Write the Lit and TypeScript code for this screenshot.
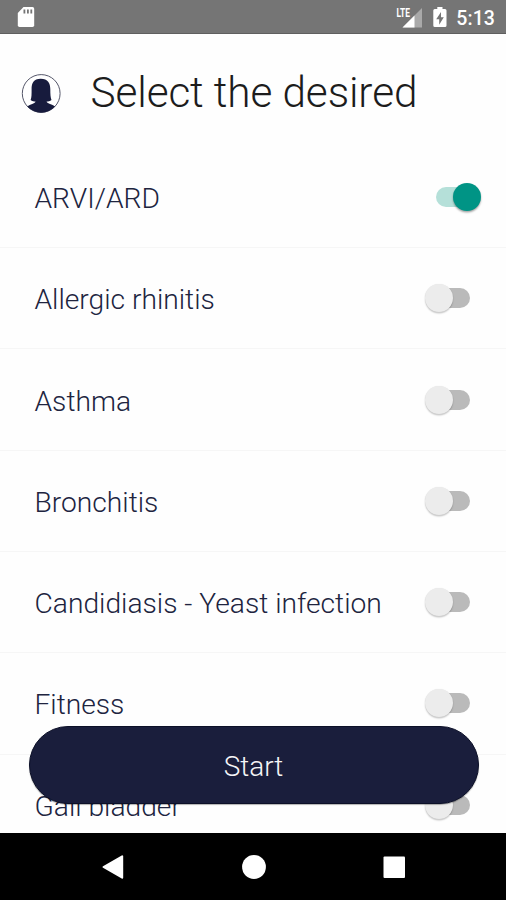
import { LitElement, html, css } from "lit";
import { customElement, property, state } from "lit/decorators.js";
import { classMap } from "lit/directives/class-map.js";

@customElement("status-bar")
class StatusBar extends LitElement {
  static styles = css`
    :host {
      display: flex;
      align-items: center;
      height: 34px;
      box-sizing: border-box;
      padding: 0 11px 0 17px;
      background: #757575;
      border-bottom: 1px solid #5f5f5f;
      color: #fff;
      font: 500 19.5px/34px Roboto, sans-serif;
    }
    svg { display: block; flex: none; }
    .signal { margin-left: auto; }
    .battery { margin: 1px 9px 0 10px; }
    .clock { padding-top: 4px; letter-spacing: 0.1px; }
    .lte { font: 700 12px Roboto, sans-serif; }
  `;
  render() {
    return html`
      <svg class="card" width="18" height="22" viewBox="0 0 18 22">
        <path fill="#fff" d="M6.5 1H15.5Q17.2 1 17.2 2.7V19.3Q17.2 21 15.5 21H2.5Q.8 21 .8 19.3V7Z" />
        <path fill="#757575" d="M6.5 3.6h1.8v4H6.5zM10 3.6h1.8v4H10zM13.4 3.6h1.8v4h-1.8z" />
      </svg>
      <svg class="signal" width="27" height="22" viewBox="0 0 27 22">
        <path fill="#a9a9a9" d="M26 2V21.5H6.5Z" />
        <path fill="#fff" d="M18.5 9.5V21.5H6.5Z" />
        <path fill="#757575" d="M0 0h14.5v11H0z" />
        <text class="lte" x="0.5" y="10.5" textLength="13.5" lengthAdjust="spacingAndGlyphs" fill="#fff">LTE</text>
      </svg>
      <svg class="battery" width="14" height="22" viewBox="0 0 14 22">
        <path fill="#fff" d="M4.3 1h5.2v2H12q1.5 0 1.5 1.5v15Q13.5 21 12 21H1.8Q.3 21 .3 19.5v-15Q.3 3 1.8 3H4.3Z" />
        <path fill="#757575" d="M8 6L3.2 13.2H6.2V18.8L10.8 11.3H8Z" />
      </svg>
      <span class="clock">5:13</span>
    `;
  }
}

@customElement("toggle-switch")
class ToggleSwitch extends LitElement {
  @property({ type: Boolean }) on = false;
  static styles = css`
    :host { display: block; }
    .switch {
      display: flex;
      align-items: center;
      width: 45px;
      height: 28px;
      margin-right: 36px;
    }
    .track {
      width: 32px;
      height: 20px;
      margin-left: 13px;
      border-radius: 10px;
      background: #bababa;
    }
    .thumb {
      flex: none;
      width: 28px;
      height: 28px;
      margin-left: -45px;
      border-radius: 50%;
      background: #ececec;
      box-shadow: 0 1.5px 1.5px rgba(0, 0, 0, 0.2), 0 0 1px rgba(0, 0, 0, 0.1);
    }
    .on { margin-right: 25px; }
    .on .track { margin-left: 0; background: #b5e0d9; }
    .on .thumb { margin-left: -15px; background: #009485; box-shadow: 0 1.5px 2px rgba(0, 0, 0, 0.35); }
  `;
  render() {
    return html`<div class=${classMap({ switch: true, on: this.on })}>
      <div class="track"></div>
      <div class="thumb"></div>
    </div>`;
  }
}

@customElement("app-root")
class AppRoot extends LitElement {
  @state() private items = [
    { label: "ARVI/ARD", on: true },
    { label: "Allergic rhinitis", on: false },
    { label: "Asthma", on: false },
    { label: "Bronchitis", on: false },
    { label: "Candidiasis - Yeast infection", on: false },
    { label: "Fitness", on: false },
    { label: "Gall bladder", on: false },
  ];

  static styles = css`
    :host {
      display: flex;
      flex-direction: column;
      height: 900px;
      background: #fefefe;
      font-family: Roboto, sans-serif;
      font-weight: 300;
    }
    main {
      position: relative;
      flex: 1;
      min-height: 0;
      overflow: hidden;
    }
    header {
      display: flex;
      align-items: center;
      height: 112.8px;
      padding: 0 0 0 21px;
    }
    .avatar { display: block; margin-top: 6px; }
    h1 {
      margin: 6px 0 0 28.5px;
      font-size: 42.3px;
      line-height: 50px;
      font-weight: 300;
      letter-spacing: -0.1px;
      color: #1c1c1c;
      white-space: nowrap;
    }
    .row {
      display: flex;
      align-items: center;
      justify-content: space-between;
      box-sizing: border-box;
      height: 101.3px;
      padding-left: 34.5px;
      border-bottom: 1px solid #f6f6f6;
      font-size: 28.2px;
      color: #20243f;
    }
    .label { padding-top: 3px; white-space: nowrap; }
    .start {
      position: absolute;
      left: 28.5px;
      right: 27.5px;
      bottom: 29px;
      height: 78px;
      border: 1px solid #0c1028;
      box-sizing: border-box;
      border-radius: 39px;
      background: #1a1e3c;
      color: #f4f4f6;
      font: 300 28px/77px Roboto, sans-serif;
      padding: 1px 0 0;
      text-align: center;
      box-shadow: 0 1px 1px rgba(0, 0, 0, 0.3);
    }
    nav {
      display: flex;
      align-items: center;
      justify-content: space-between;
      box-sizing: border-box;
      height: 67px;
      padding: 0 100px 0 101px;
      background: #000;
    }
    nav svg { display: block; }
  `;

  private toggle(index: number) {
    this.items = this.items.map((item, i) => (i === index ? { ...item, on: !item.on } : item));
  }

  render() {
    return html`
      <status-bar></status-bar>
      <main>
        <header>
          <svg class="avatar" width="41" height="41" viewBox="0 0 41 41">
            <circle cx="20.2" cy="20.5" r="18.9" fill="#fff" stroke="#55576a" stroke-width="1" />
            <path fill="#171b3d" d="M19.7 5.8C12.5 5.8 10.6 10.5 10.6 16C10.6 21.5 10.6 24.5 9.6 27C11 28.4 13 28.6 14.5 28.6C14 30.8 10.5 30.8 6.3 33.6A18.9 18.9 0 0 0 34.1 33.6C29.9 30.8 26.1 30.8 25.6 28.6C27.1 28.6 29.1 28.4 30.5 27C29.5 24.5 29.3 21.5 29.3 16C29.3 10.5 26.9 5.8 19.7 5.8Z" />
          </svg>
          <h1>Select the desired</h1>
        </header>
        ${this.items.map(
          (item, i) => html`<div class="row">
            <span class="label">${item.label}</span>
            <toggle-switch ?on=${item.on} @click=${() => this.toggle(i)}></toggle-switch>
          </div>`
        )}
        <button class="start">Start</button>
      </main>
      <nav>
        <svg width="24" height="26" viewBox="0 0 24 26">
          <path fill="#fff" stroke="#fff" stroke-width="2" stroke-linejoin="round" d="M2.5 13L21.2 2.3V23.7Z" />
        </svg>
        <svg width="24" height="26" viewBox="0 0 24 26"><circle cx="12" cy="13" r="11.9" fill="#fff" /></svg>
        <svg width="24" height="26" viewBox="0 0 24 26"><rect x="1.5" y="2.5" width="21.5" height="21.5" rx="1" fill="#fff" /></svg>
      </nav>
    `;
  }
}
